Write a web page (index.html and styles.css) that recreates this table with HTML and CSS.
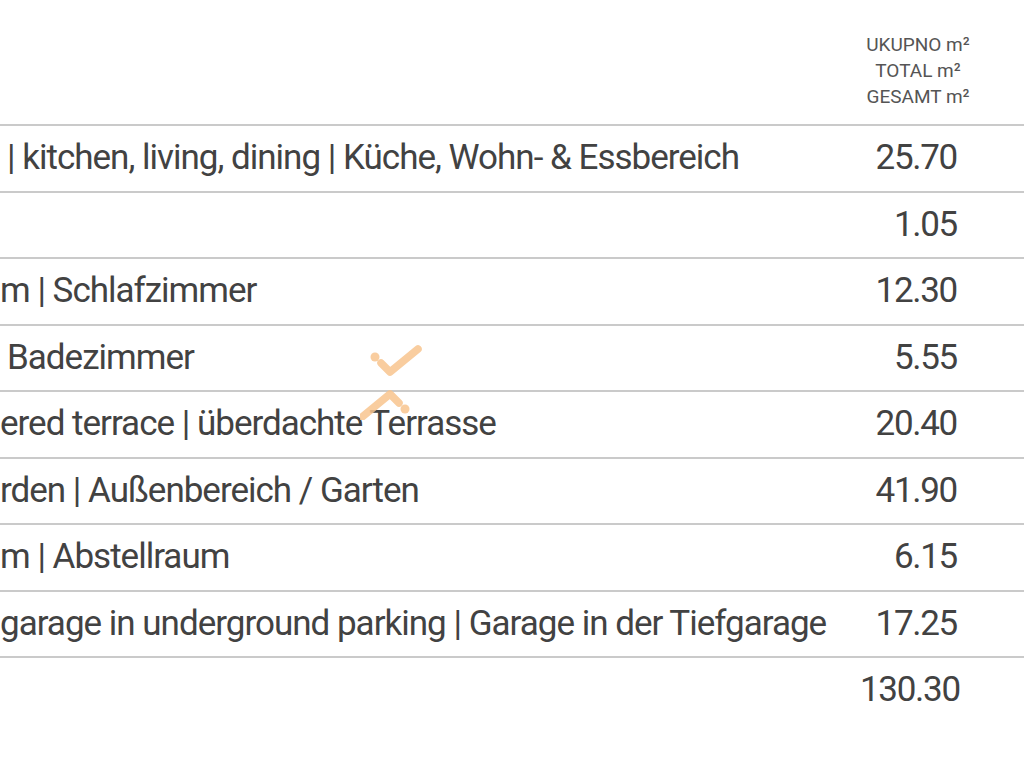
FILE: index.html
```html
<!DOCTYPE html>
<html>
<head>
<meta charset="utf-8">
<link rel="stylesheet" href="styles.css">
</head>
<body>
<div class="sheet">
  <div class="row head">
    <div class="label"></div>
    <div class="value head-value">UKUPNO m²<br>TOTAL m²<br>GESAMT m²</div>
  </div>
  <div class="row line"><div class="label indent">| kitchen, living, dining | Küche, Wohn- &amp; Essbereich</div><div class="value">25.70</div></div>
  <div class="row line"><div class="label"></div><div class="value">1.05</div></div>
  <div class="row line"><div class="label">m | Schlafzimmer</div><div class="value">12.30</div></div>
  <div class="row line"><div class="label indent">Badezimmer</div><div class="value">5.55</div></div>
  <div class="row line"><div class="label">ered terrace | überdachte Terrasse</div><div class="value">20.40</div></div>
  <div class="row line"><div class="label">rden | Außenbereich / Garten</div><div class="value">41.90</div></div>
  <div class="row line"><div class="label">m | Abstellraum</div><div class="value">6.15</div></div>
  <div class="row line"><div class="label">garage in underground parking | Garage in der Tiefgarage</div><div class="value">17.25</div></div>
  <div class="row line total"><div class="label"></div><div class="value">130.30</div></div>
  <svg class="watermark" width="70" height="80" viewBox="0 0 70 80">
    <circle cx="15" cy="17" r="4.5"/>
    <path d="M21 23 L30 32 L58 9"/>
    <circle cx="45" cy="69" r="4.5"/>
    <path d="M39 63 L30 54 L2 77"/>
  </svg>
</div>
</body>
</html>
```
FILE: styles.css
```css
html, body {
  margin: 0;
  padding: 0;
  background: #ffffff;
}
.sheet {
  position: relative;
  width: 1024px;
  height: 768px;
  overflow: hidden;
  font-family: Roboto, "Liberation Sans", sans-serif;
  color: #424242;
}
.row {
  display: flex;
  align-items: center;
}
.head {
  height: 124px;
  align-items: flex-start;
}
.line {
  height: 66.5px;
  border-top: 2px solid #cacaca;
  box-sizing: border-box;
}
.label {
  flex: 1;
  font-size: 35px;
  line-height: 40px;
  white-space: nowrap;
  overflow: hidden;
  letter-spacing: -1px;
}
.indent {
  padding-left: 7px;
}
.value {
  width: 116px;
  margin-right: 48px;
  text-align: right;
  padding-right: 19px;
  box-sizing: border-box;
  font-size: 35px;
  line-height: 40px;
  letter-spacing: -1.3px;
}
.head-value {
  text-align: center;
  padding-right: 0;
  padding-top: 32px;
  font-size: 19px;
  line-height: 26px;
  color: #555555;
  letter-spacing: 0;
}
.watermark {
  position: absolute;
  left: 360px;
  top: 340px;
  fill: #f8c58f;
  stroke: #f8c58f;
  stroke-width: 7.5;
  stroke-linecap: round;
  stroke-linejoin: round;
  opacity: 0.85;
}
.watermark circle {
  stroke: none;
}
.watermark path {
  fill: none;
}
```
